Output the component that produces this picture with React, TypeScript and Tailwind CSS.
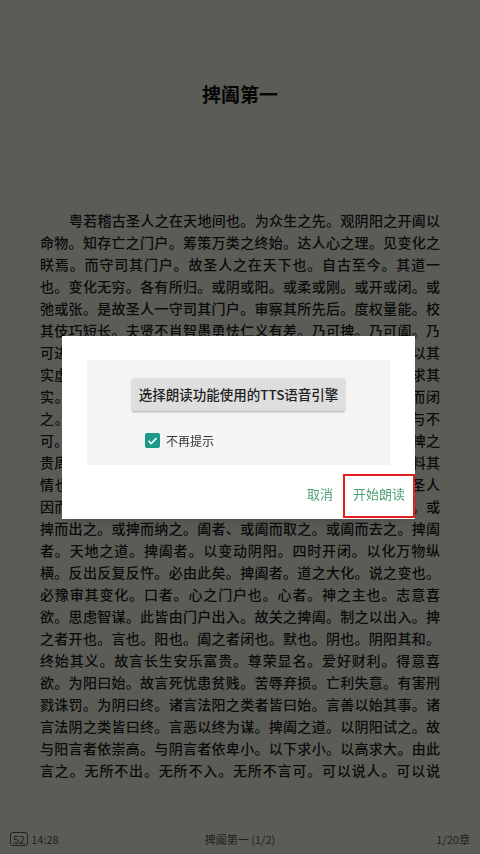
import { useState } from 'react';

const cjk = { fontFamily: '"Noto Sans CJK SC", "Noto Sans", sans-serif' };

const lines = [
  '粤若稽古圣人之在天地间也。为众生之先。观阴阳之开阖以',
  '命物。知存亡之门户。筹策万类之终始。达人心之理。见变化之',
  '眹焉。而守司其门户。故圣人之在天下也。自古至今。其道一',
  '也。变化无穷。各有所归。或阴或阳。或柔或刚。或开或闭。或',
  '弛或张。是故圣人一守司其门户。审察其所先后。度权量能。校',
  '其伎巧短长。夫贤不肖智愚勇怯仁义有差。乃可捭。乃可阖。乃',
  '可进。乃可退。乃可贱。乃可贵。无为以牧之。审定有无。以其',
  '实虚。随其嗜欲。以见其志意。微排其所言。而捭反之。以求其',
  '实。贵得其指。阖而捭之。以求其利。或开而示之。或阖而闭',
  '之。开而示之者。同其情也。阖而闭之者。异其诚也。可与不',
  '可。审明其计谋。以原其同异。离合有守。先从其志。即欲捭之',
  '贵周。即欲阖之贵密。周密之贵微。而与道相追。捭之者。料其',
  '情也。阖之者。结其诚也。皆见其权衡轻重乃为之度数。圣人',
  '因而为之虑。其不中权衡度数。圣人因而自为之虑。故捭者。或',
  '捭而出之。或捭而纳之。阖者、或阖而取之。或阖而去之。捭阖',
  '者。天地之道。捭阖者。以变动阴阳。四时开闭。以化万物纵',
  '横。反出反复反忤。必由此矣。捭阖者。道之大化。说之变也。',
  '必豫审其变化。口者。心之门户也。心者。神之主也。志意喜',
  '欲。思虑智谋。此皆由门户出入。故关之捭阖。制之以出入。捭',
  '之者开也。言也。阳也。阖之者闭也。默也。阴也。阴阳其和。',
  '终始其义。故言长生安乐富贵。尊荣显名。爱好财利。得意喜',
  '欲。为阳曰始。故言死忧患贫贱。苦辱弃损。亡利失意。有害刑',
  '戮诛罚。为阴曰终。诸言法阳之类者皆曰始。言善以始其事。诸',
  '言法阴之类皆曰终。言恶以终为谋。捭阖之道。以阴阳试之。故',
  '与阳言者依崇高。与阴言者依卑小。以下求小。以高求大。由此',
  '言之。无所不出。无所不入。无所不言可。可以说人。可以说',
];

function Reader() {
  return (
    <div className="flex h-[854px] flex-col bg-[#e6e6da] text-[#1c1c1c]" style={cjk}>
      <div className="pt-[80px] text-center text-[19px] font-bold leading-[28px] text-[#111]">捭阖第一</div>
      <div className="mx-[40px] mt-[101px] flex-1 text-[14px] font-medium leading-[22px]">
        {lines.map((l, i) => (
          <div key={i} className={`[text-align-last:justify] ${i === 0 ? 'pl-[29px]' : ''}`}>
            {l}
          </div>
        ))}
      </div>
      <div className="flex h-[30px] items-center justify-between px-[10px] text-[11px] text-[#555]">
        <div className="flex w-[120px] items-center gap-[3px]">
          <span className="rounded-[3px] border border-[#555] px-[2px] leading-[12px]">52</span>
          <span>14:28</span>
        </div>
        <span>捭阖第一 (1/2)</span>
        <span className="w-[120px] text-right">1/20章</span>
      </div>
    </div>
  );
}

function TtsDialog() {
  const [noMore, setNoMore] = useState(true);
  return (
    <div className="fixed inset-0 flex items-center justify-center bg-black/60" style={cjk}>
      <div className="ml-[-3px] flex w-[353px] flex-col bg-white px-[25px] pt-[24px] pb-px shadow-lg">
        <div className="flex h-[105px] flex-col bg-[#f4f4f4] pt-[18px]">
          <button className="mx-auto h-[33px] w-[213px] rounded-[2px] bg-[#dedede] text-[13.5px] font-medium text-[#222] shadow-[0_1px_2px_rgba(0,0,0,0.3)]">
            选择朗读功能使用的TTS语音引擎
          </button>
          <label className="ml-[58px] mt-[21px] flex items-center gap-[6px] text-[12px] text-[#333]">
            <span
              onClick={() => setNoMore(!noMore)}
              className={`flex h-[15px] w-[15px] items-center justify-center rounded-[2px] ${noMore ? 'bg-[#1a9a88]' : 'border-2 border-[#777]'}`}
            >
              {noMore && (
                <svg viewBox="0 0 24 24" className="h-[13px] w-[13px]" fill="none" stroke="white" strokeWidth="3">
                  <path d="M4.5 12.5l5 5 10-10" />
                </svg>
              )}
            </span>
            不再提示
          </label>
        </div>
        <div className="mr-[-25px] mt-[9px] flex items-center justify-end text-[13px] text-[#4f9f74]">
          <button className="h-[44px] px-[10px] pb-[3px]">取消</button>
          <button className="h-[44px] border-2 border-[#e02020] px-[8px] pb-[3px]">开始朗读</button>
        </div>
      </div>
    </div>
  );
}

export default function App() {
  return (
    <div className="relative h-[854px] w-[480px] overflow-hidden">
      <Reader />
      <TtsDialog />
    </div>
  );
}
